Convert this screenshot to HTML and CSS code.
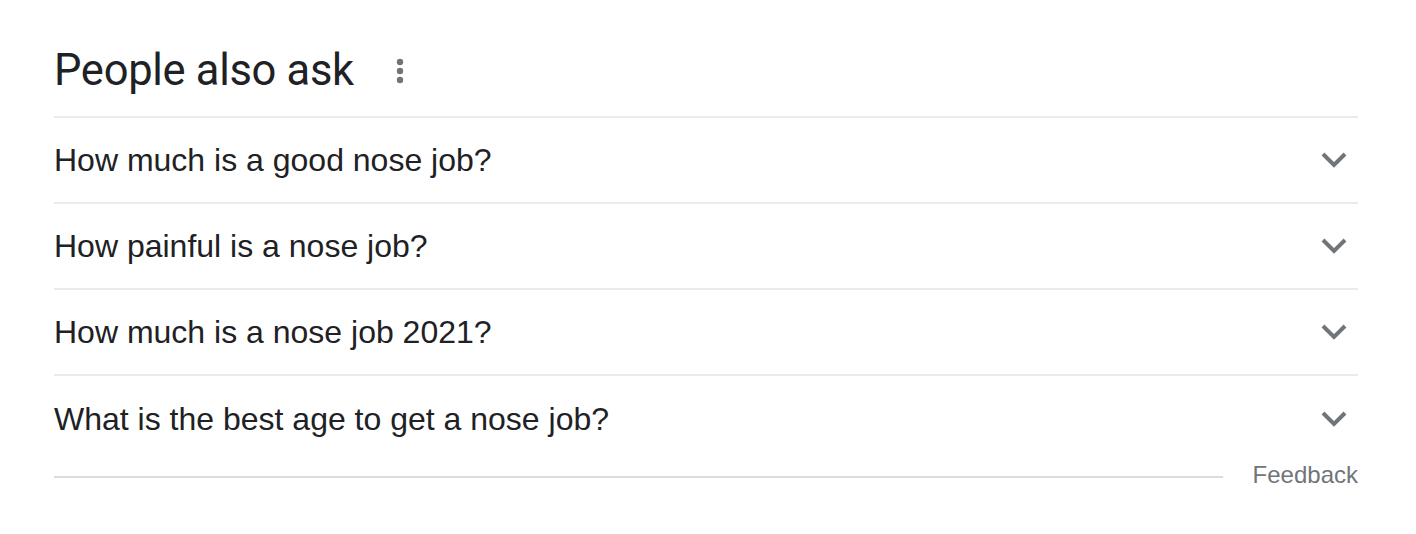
FILE: index.html
```html
<!DOCTYPE html>
<html>
<head>
<meta charset="utf-8">
<link rel="stylesheet" href="styles.css">
</head>
<body>
<div class="paa">
  <div class="header">
    <h2 class="title">People also ask</h2>
    <svg class="more" width="8" height="26" viewBox="0 0 8 26"><circle cx="4" cy="4" r="3.2"/><circle cx="4" cy="13" r="3.2"/><circle cx="4" cy="22" r="3.2"/></svg>
  </div>
  <div class="list">
    <div class="row"><span class="q">How much is a good nose job?</span><svg class="chev" viewBox="0 0 28 18"><path d="M3 3 L14 14 L25 3"/></svg></div>
    <div class="row"><span class="q">How painful is a nose job?</span><svg class="chev" viewBox="0 0 28 18"><path d="M3 3 L14 14 L25 3"/></svg></div>
    <div class="row"><span class="q">How much is a nose job 2021?</span><svg class="chev" viewBox="0 0 28 18"><path d="M3 3 L14 14 L25 3"/></svg></div>
    <div class="row"><span class="q">What is the best age to get a nose job?</span><svg class="chev" viewBox="0 0 28 18"><path d="M3 3 L14 14 L25 3"/></svg></div>
  </div>
  <div class="footer">
    <div class="rule"></div>
    <span class="feedback">Feedback</span>
  </div>
</div>
</body>
</html>
```
FILE: styles.css
```css
html, body {
  margin: 0;
  padding: 0;
  background: #fff;
}
.paa {
  width: 1304px;
  margin-left: 54px;
  padding-top: 45px;
  font-family: "Liberation Sans", Arial, sans-serif;
  color: #202124;
}
.header {
  display: flex;
  height: 71px;
  border-bottom: 2px solid #ebebeb;
  align-items: flex-start;
}
.title {
  margin: 0;
  font-family: Roboto, "Open Sans", sans-serif;
  font-weight: 400;
  font-size: 43.5px;
  line-height: 52px;
  letter-spacing: -0.3px;
  color: #202124;
}
.more {
  fill: #70757a;
  margin-left: 42px;
  margin-top: 13px;
}
.row {
  display: flex;
  align-items: center;
  justify-content: space-between;
  height: 84px;
  border-bottom: 2px solid #ebebeb;
}
.row:last-child {
  border-bottom: none;
  height: 86px;
}
.q {
  font-size: 32px;
  line-height: 36px;
}
.chev {
  width: 28px;
  height: 18px;
  margin-right: 10px;
  fill: none;
  stroke: #70757a;
  stroke-width: 4;
}
.footer {
  display: flex;
  align-items: center;
  height: 26px;
}
.rule {
  flex: 1;
  height: 2px;
  background: #dadce0;
  margin-top: 3px;
}
.feedback {
  margin-left: 30px;
  font-size: 24px;
  color: #70757a;
}
```
